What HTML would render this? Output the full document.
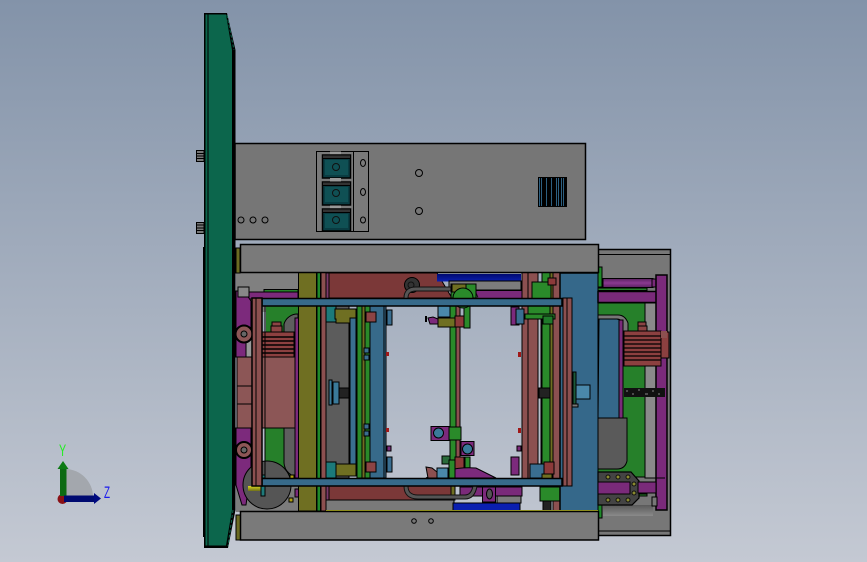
<!DOCTYPE html>
<html><head><meta charset="utf-8"><style>
html,body{margin:0;padding:0;width:867px;height:562px;overflow:hidden;background:#a5aebd}
svg{display:block}
text{font-family:"Liberation Sans",sans-serif}
</style></head><body>
<svg width="867" height="562" viewBox="0 0 867 562" xmlns="http://www.w3.org/2000/svg">
<defs>
<linearGradient id="bg" x1="0" y1="0" x2="0" y2="1"><stop offset="0" stop-color="#8393a9"/><stop offset="1" stop-color="#c4c9d3"/></linearGradient>
<linearGradient id="navy" x1="0" y1="0" x2="0" y2="1"><stop offset="0" stop-color="#000a70"/><stop offset="1" stop-color="#0a1fb0"/></linearGradient>
<linearGradient id="cyl" x1="0" y1="0" x2="0" y2="1"><stop offset="0" stop-color="#5a2060"/><stop offset=".5" stop-color="#8a3a90"/><stop offset="1" stop-color="#5a2060"/></linearGradient>
<linearGradient id="yg" x1="0" y1="0" x2="0" y2="1"><stop offset="0" stop-color="#d8d820"/><stop offset="1" stop-color="#70701a"/></linearGradient>
<linearGradient id="gr" x1="0" y1="0" x2="0" y2="1"><stop offset="0" stop-color="#5a5a5a"/><stop offset="1" stop-color="#8a8a8a"/></linearGradient>
</defs>
<rect width="867" height="562" fill="url(#bg)"/>

<g stroke="#000" stroke-width="1">
<!-- right outer frame -->
<rect x="598" y="249.5" width="72.5" height="286" fill="#777" stroke-width="1.5"/>
<path d="M598 254.5H670M598 531H670" fill="none"/>

<!-- back fill grey -->
<rect x="236" y="272" width="62" height="40" fill="#808080" stroke="none"/>
<rect x="236" y="470" width="100" height="42" fill="#7c7c7c" stroke="none"/>
<rect x="326" y="500" width="128" height="11" fill="#7a7a7a"/>

<!-- left green, dark pocket -->
<rect x="266" y="298" width="33" height="36" fill="#26802a" stroke="none"/>
<rect x="265" y="428" width="34" height="50" fill="#26802a" stroke="none"/>
<path d="M284 334v-10a14 14 0 0 1 14-10v20zM284 428v35a15 15 0 0 0 15 14v-49z" fill="#5e5e5e"/>
<rect x="264" y="289.5" width="34" height="2.5" fill="#26802a"/>
<rect x="236" y="292" width="62" height="7" fill="#7c2a7c"/>
<rect x="295" y="318" width="4" height="160" fill="#7c2a7c"/>

<!-- left machinery purple -->
<path d="M236 291h8l7 10v56h-15z" fill="#7c2a7c"/>
<path d="M236 428h15v40l-5 37h-4l-6-20z" fill="#7c2a7c"/>
<rect x="246" y="335" width="6" height="22" fill="#999"/>
<rect x="238" y="287" width="11" height="10" fill="#888"/>
<path d="M236 248h4v25h-4z" fill="#6b6b22"/>
<path d="M236 515h5v25h-5z" fill="#6b6b22"/>

<!-- big disc -->
<circle cx="267" cy="485" r="24" fill="#555"/>
<path d="M248 486h16v5h-16z" fill="url(#yg)" stroke="none"/>
<rect x="261" y="475" width="4" height="21" fill="#1f7a7a"/>
<rect x="290" y="475" width="4" height="5" fill="#b0a010"/>
<rect x="289" y="498" width="4" height="4" fill="#b0a010"/>
<rect x="295" y="489" width="4" height="8" fill="#7c2a7c"/>

<!-- motor left -->
<rect x="237" y="357" width="15" height="71" fill="#8c5656"/>
<path d="M237 386h15M237 404h15" fill="none"/>
<rect x="262" y="357" width="33" height="71" fill="#8c5656"/>
<rect x="272" y="322" width="9" height="4" fill="#8c4444"/>
<rect x="271" y="326" width="11" height="6" fill="#8c4444"/>
<rect x="262" y="332" width="32" height="25" fill="#8c4040"/>
<path d="M262 337h32M262 341h32M262 345h32M262 349h32M262 353h32" fill="none" stroke-width="1.4"/>

<!-- gears -->
<circle cx="244" cy="334" r="8.500" fill="#8c5656" stroke-width="2"/>
<circle cx="244" cy="334" r="3" fill="#666"/>
<circle cx="244" cy="450" r="8" fill="#8c5656" stroke-width="2"/>
<circle cx="244" cy="450" r="3" fill="#666"/>

<!-- centre-left column group -->
<rect x="298.500" y="272" width="18" height="239" fill="#6f6f22"/>
<rect x="317" y="272" width="3.500" height="239" fill="#1f8a2a"/>
<rect x="321" y="272" width="5" height="239" fill="#8c5050"/>

<!-- top brown + band -->
<path d="M329 273H437L452 298H329z" fill="#7b3838"/>
<path d="M326 273h3v26h-3zM326 486h3v14h-3z" fill="#7c3a6a"/>
<rect x="329" y="486" width="125" height="14" fill="#7b3838"/>
<rect x="437" y="274" width="84" height="7.500" fill="url(#navy)" stroke="none"/>
<rect x="449" y="281" width="72" height="9" fill="#7c7c7c"/>
<rect x="466" y="290.500" width="56" height="8" fill="#7a2a7a"/>
<rect x="453" y="503" width="67" height="8" fill="#0a1fb0"/>
<rect x="460" y="487" width="62" height="9" fill="#7a2a7a"/>
<rect x="497" y="496" width="24" height="7" fill="#7c7c7c"/>

<!-- left grey panel -->
<rect x="326" y="306" width="23" height="172" fill="#5c5c5c"/>
<rect x="326" y="306" width="10" height="16" fill="#1c7a7a"/>
<path d="M335 309h21v14h-20v-4h-1z" fill="#6f6f22"/>
<path d="M336 300h7v5h-7z" fill="#7c2a7c"/>
<path d="M335 464h21v12h-21z" fill="#6f6f22"/>
<rect x="326" y="462" width="10" height="16" fill="#1c7a7a"/>
<rect x="350" y="318" width="6" height="146" fill="#3a6e90"/>
<rect x="357" y="306" width="5" height="172" fill="#2a8a2a"/>
<rect x="362" y="306" width="3" height="172" fill="#6f6f22"/>
<rect x="365" y="306" width="5" height="172" fill="#2a8a2a"/>
<rect x="370" y="306" width="14" height="172" fill="#376a8a"/>
<rect x="384" y="306" width="2" height="172" fill="#3a6e90"/>
<path d="M366 312h10v10h-10zM366 462h10v10h-10z" fill="#8c4444"/>
<path d="M329 380h3v25h-3zM333 382h6v22h-6z" fill="#3a7a9a"/>
<rect x="339" y="388" width="10" height="10" fill="#222"/>
<rect x="364" y="348" width="5" height="5" fill="#3a6e90"/>
<rect x="364" y="355" width="5" height="5" fill="#3a6e90"/>
<rect x="364" y="424" width="5" height="5" fill="#3a6e90"/>
<rect x="364" y="431" width="5" height="5" fill="#3a6e90"/>
<rect x="387" y="310" width="5" height="15" fill="#3a6e90"/>
<rect x="387" y="457" width="5" height="15" fill="#3a6e90"/>
<rect x="386" y="352" width="3" height="4" fill="#a01818" stroke="none"/>
<rect x="386" y="428" width="3" height="4" fill="#a01818" stroke="none"/>
<rect x="387" y="446" width="4" height="5" fill="#7c2a7c"/>

<!-- right columns -->
<rect x="522" y="272" width="6" height="214" fill="#8c5050"/>
<rect x="528" y="272" width="10" height="214" fill="#8c5050"/>
<rect x="538" y="306" width="3" height="172" fill="#b7bdc9"/>
<rect x="542" y="272" width="8" height="214" fill="#2a8a2a"/>
<rect x="550" y="272" width="3" height="214" fill="#6f6f22"/>
<rect x="553" y="272" width="8" height="239" fill="#8c5050"/>
<rect x="532" y="282" width="19" height="17" fill="#2a8a2a"/>
<rect x="528" y="306" width="22" height="13" fill="#2a8a2a"/>
<rect x="525" y="314" width="30" height="5" fill="#2a8a2a"/>
<rect x="543" y="316" width="10" height="8" fill="#1f7a2a"/>
<rect x="548" y="278" width="8" height="7" fill="#8c3a3a"/>
<rect x="511" y="307" width="8" height="18" fill="#7c2a7c"/>
<rect x="516" y="309" width="8" height="15" fill="#3a6e90"/>
<rect x="511" y="457" width="8" height="18" fill="#7c2a7c"/>
<rect x="530" y="464" width="14" height="14" fill="#3a6e90"/>
<rect x="544" y="462" width="10" height="12" fill="#8c3a3a"/>
<rect x="542" y="474" width="10" height="5" fill="#6f6f22"/>
<rect x="540" y="487" width="21" height="14" fill="#2a8a2a"/>
<rect x="543" y="501" width="8" height="10" fill="#222"/>
<rect x="518" y="352" width="3" height="5" fill="#a01818" stroke="none"/>
<rect x="518" y="428" width="3" height="5" fill="#a01818" stroke="none"/>
<rect x="517" y="446" width="4" height="5" fill="#7c2a7c"/>
<rect x="539" y="388" width="11" height="10" fill="#222"/>

<!-- blue large right column -->
<rect x="560" y="273" width="38.500" height="238" fill="#35688a" stroke-width="1.500"/>
<rect x="563" y="298" width="9" height="188" fill="#8c5050"/>
<path d="M567 298v188" fill="none"/>
<rect x="573" y="372" width="3" height="34" fill="#1c5a3a"/>
<rect x="572" y="404" width="6" height="3" fill="#777"/>
<rect x="576" y="385" width="14" height="14" fill="#4a88aa"/>
<rect x="600" y="375" width="2" height="36" fill="#111" stroke="none"/>

<!-- right side parts -->
<rect x="598" y="303" width="47" height="174" fill="#26802a" stroke-width="1"/>
<path d="M599 319h18a6 6 0 0 1 5 6v93h-24z" fill="#35688a"/>
<path d="M598 315h20q7 0 10 8v12h-5v-12q-2-4-6-4h-19z" fill="#777"/>
<rect x="619" y="320" width="4" height="99" fill="#7a2a7a"/>
<path d="M598 418h29v43q-2 8-10 8h-19z" fill="#5a5a5a"/>
<rect x="645" y="303" width="11" height="175" fill="#8a8a8a"/>
<rect x="598" y="279" width="6" height="11" fill="#777" stroke="none"/>
<rect x="598" y="267" width="4" height="20" fill="#1f8a2a"/>
<rect x="603" y="278.500" width="50" height="9" fill="url(#cyl)"/>
<rect x="652" y="279" width="5" height="8" fill="#7a2a7a"/>
<rect x="598" y="288" width="49" height="2.500" fill="#26802a"/>
<rect x="598" y="291.500" width="60" height="11" fill="#7a2a7a" stroke-width="1.500"/>
<rect x="656" y="275" width="11" height="235" fill="#7a2a7a" stroke-width="1.500"/>
<path d="M645 478h20" fill="none"/>
<rect x="598" y="494" width="49" height="2" fill="#26802a"/>
<rect x="598" y="497" width="4" height="21" fill="#1f8a2a"/>
<rect x="603" y="505" width="50" height="11" fill="url(#gr)" stroke="none"/>
<rect x="652" y="497" width="5" height="9" fill="#777"/>
<!-- chain -->
<path d="M598 472h33l8 9v17l-7 7h-34z" fill="#444" stroke-width="1.200"/>
<rect x="598" y="482" width="32" height="12" fill="#7a2a7a"/>
<rect x="638" y="482" width="18" height="11" fill="#7a2a7a"/>
<g fill="#8a8a30" stroke="#111"><circle cx="608" cy="477" r="2"/><circle cx="618" cy="477" r="2"/><circle cx="628" cy="477" r="2"/><circle cx="634" cy="484" r="2"/><circle cx="634" cy="493" r="2"/><circle cx="628" cy="500" r="2"/><circle cx="618" cy="500" r="2"/><circle cx="608" cy="500" r="2"/></g>
<!-- motor right -->
<rect x="624" y="331" width="37" height="35" fill="#8c4040"/>
<path d="M624 336h37M624 340h37M624 344h37M624 348h37M624 352h37M624 356h37M624 360h37" fill="none" stroke-width="1.200"/>
<rect x="638" y="322" width="8" height="4" fill="#8c4444"/>
<rect x="638" y="326" width="9" height="5" fill="#8c4444"/>
<rect x="661" y="332" width="8" height="26" fill="#8c4040"/>
<rect x="661" y="331" width="6" height="7" fill="#8c5050" stroke="none"/>
<rect x="624" y="388" width="41" height="9" fill="#111" stroke="none"/>
<path d="M626 391h2M632 394h2M638 390h2M645 394h3M652 391h2M658 394h2" stroke="#888"/>

<!-- centre column -->
<rect x="450" y="305" width="6" height="172" fill="#2a8a2a"/>
<rect x="456" y="305" width="4" height="172" fill="#8c5050"/>
<rect x="443" y="305" width="6" height="8" fill="#3a6e90"/>
<rect x="438" y="306" width="12" height="11" fill="#4a88aa"/>
<rect x="438" y="318" width="18" height="9" fill="#6f6f22"/>
<rect x="455" y="316" width="9" height="11" fill="#8c3a3a"/>
<rect x="464" y="306" width="6" height="22" fill="#2a8a2a"/>
<path d="M428 318l5-1 5 2v5h-8z" fill="#7c2a7c"/>
<path d="M426 316v6" fill="none" stroke-width="2"/>
<rect x="431" y="426.500" width="18" height="14" fill="#7c2a7c"/>
<circle cx="438.500" cy="433" r="5" fill="#3a7a9a"/>
<rect x="449" y="427" width="12" height="13" fill="#2a8a2a"/>
<rect x="461" y="441.500" width="13" height="14" fill="#7c2a7c"/>
<circle cx="467.500" cy="449" r="5" fill="#3a7a9a"/>
<rect x="465" y="457" width="5" height="13" fill="#2a8a2a"/>
<rect x="455" y="457" width="9" height="13" fill="#8c3a3a"/>
<rect x="456" y="470" width="8" height="8" fill="#777"/>
<path d="M426 478q25-12 50-10l20 10z" fill="#7c2a7c"/>
<path d="M426 467l6 1 5 4v6h-9z" fill="#8c5050"/>
<rect x="437" y="468" width="11" height="10" fill="#4a88aa"/>
<rect x="442" y="456" width="8" height="8" fill="#2a6a3a"/>
<rect x="449" y="460" width="6" height="18" fill="#2a8a2a"/>
<rect x="451" y="486" width="4" height="14" fill="#6f6f22"/>

<!-- top centre knob and pipes -->
<circle cx="412" cy="285" r="7.500" fill="#333"/>
<circle cx="411" cy="285" r="3" fill="#333" stroke="#111"/>
<path d="M406 298q0-9 10-9h49q8 0 11 9" fill="none" stroke="#111" stroke-width="5"/>
<path d="M406 298q0-9 10-9h49q8 0 11 9" fill="none" stroke="#555" stroke-width="3"/>
<rect x="451" y="284" width="25" height="14" fill="#2a8a2a"/>
<rect x="452" y="284" width="14" height="8" fill="#6f6f22"/>
<circle cx="463" cy="298" r="10" fill="#2a8a2a"/>
<path d="M406 486q0 11 12 11h47q8 0 10-11" fill="none" stroke="#111" stroke-width="5"/>
<path d="M406 486q0 11 12 11h47q8 0 10-11" fill="none" stroke="#555" stroke-width="3"/>
<rect x="482.500" y="487" width="13" height="15" fill="#7c2a7c"/>
<ellipse cx="489.500" cy="494" rx="3" ry="5" fill="#555"/>

<!-- frame bars -->
<rect x="262" y="298.500" width="300" height="7.500" fill="#376a8a" stroke-width="1.500"/>
<rect x="262" y="478.500" width="300" height="7.500" fill="#376a8a" stroke-width="1.500"/>
<rect x="252" y="298" width="10" height="188" fill="#8c5050" stroke-width="1.500"/>
<path d="M256 298v188" fill="none"/>
<path d="M262 306h3v172h-3" fill="none"/>

<!-- top/bottom grey blocks -->
<rect x="240.500" y="244.500" width="358" height="28" fill="#7a7a7a" stroke-width="1.500"/>
<rect x="240.500" y="511.500" width="358" height="28.500" fill="#7a7a7a" stroke-width="1.500"/>
<path d="M326 510.500H598" stroke="#8c8c1c" fill="none"/>
<circle cx="414" cy="521" r="2.300" fill="#777"/>
<circle cx="431" cy="521" r="2.300" fill="#777"/>

<!-- upper grey box -->
<rect x="235" y="143.500" width="350.500" height="96" fill="#767676" stroke-width="1.500"/>
<rect x="316.500" y="151.500" width="52" height="80" fill="#7a7a7a"/>
<path d="M353.500 151.500v80" fill="none"/>
<g>
<rect x="330" y="151.500" width="11" height="3" fill="#999" stroke="none"/>
<rect x="322.500" y="155" width="28" height="23" fill="#0a3c42" stroke-width="1.500"/><rect x="322.500" y="155" width="28" height="3.500" fill="#333"/><rect x="325" y="160" width="23" height="15" fill="#0f5054" stroke="none"/><circle cx="336" cy="167" r="3.500" fill="none" stroke="#111"/>
<rect x="322.500" y="182" width="28" height="23" fill="#0a3c42" stroke-width="1.500"/><rect x="322.500" y="182" width="28" height="3.500" fill="#333"/><rect x="325" y="187" width="23" height="15" fill="#0f5054" stroke="none"/><circle cx="336" cy="193" r="3.500" fill="none" stroke="#111"/>
<rect x="330" y="178" width="11" height="3.500" fill="#999" stroke="none"/>
<rect x="330" y="205.500" width="11" height="3" fill="#999" stroke="none"/>
<rect x="322.500" y="209" width="28" height="22" fill="#0a3c42" stroke-width="1.500"/><rect x="322.500" y="209" width="28" height="3.500" fill="#333"/><rect x="325" y="214" width="23" height="14" fill="#0f5054" stroke="none"/><circle cx="336" cy="220" r="3.500" fill="none" stroke="#111"/>
</g>
<g fill="none"><ellipse cx="363" cy="163" rx="2.500" ry="3.500"/><ellipse cx="363" cy="192" rx="2.500" ry="3.500"/><ellipse cx="363" cy="220" rx="2.500" ry="3"/><circle cx="241" cy="220" r="3"/><circle cx="253" cy="220" r="3"/><circle cx="265" cy="220" r="3"/><circle cx="419" cy="173" r="3.500"/><circle cx="419" cy="211" r="3.500"/></g>
<rect x="538" y="177" width="29" height="30" fill="#000" stroke="none"/>
<path d="M539.500 178v28M541.500 178v28M546.500 178v28M551.500 178v28M556.500 178v28M558.500 178v28M561.500 178v28M563.500 178v28" stroke="#2d5f80" fill="none"/>

<!-- bolts -->
<rect x="196.500" y="150.500" width="7.500" height="11" fill="#777" stroke-width="1"/>
<path d="M196 153.500h8M196 156h8M196 158.500h8" fill="none"/>
<rect x="196.500" y="222.500" width="7.500" height="11" fill="#777" stroke-width="1"/>
<path d="M196 225h8M196 228h8M196 230.500h8" fill="none"/>

<!-- green panel -->
<rect x="203" y="247" width="2" height="290" fill="#000" stroke="none"/>
<path d="M204 13H227L235.500 50V510L228 548H204z" fill="#000" stroke="none"/>
<path d="M208.500 14.500H226L232 50V510L226 545.500H208.500z" fill="#0c664c" stroke="none"/>
<rect x="205.500" y="14.500" width="2" height="531" fill="#0c664c" stroke="none"/>
<path d="M227 15L234 50" stroke="#0c664c" stroke-width="1" stroke-dasharray="3 2" fill="none"/>
<path d="M233 510L228 546" stroke="#0c664c" stroke-width="1" stroke-dasharray="3 2" fill="none"/>
</g>

<!-- triad -->
<path d="M65 497V469A28 28 0 0 1 93 497z" fill="#a3a7ad"/>
<circle cx="62.500" cy="499" r="5" fill="#8a1015"/>
<rect x="60" y="469" width="6.500" height="27" fill="#0c6a12"/>
<path d="M63 461l5.500 8h-11z" fill="#0c7a14"/>
<rect x="64" y="495.500" width="31" height="6.500" fill="#000a70"/>
<path d="M101 498.500l-7-5.500v11z" fill="#000a80"/>
<text transform="translate(59 456) scale(.65 1)" font-size="16.500" fill="#22ee22">Y</text>
<text transform="translate(104 498) scale(.6 1)" font-size="16.500" fill="#1a1aee">Z</text>
</svg>
</body></html>
